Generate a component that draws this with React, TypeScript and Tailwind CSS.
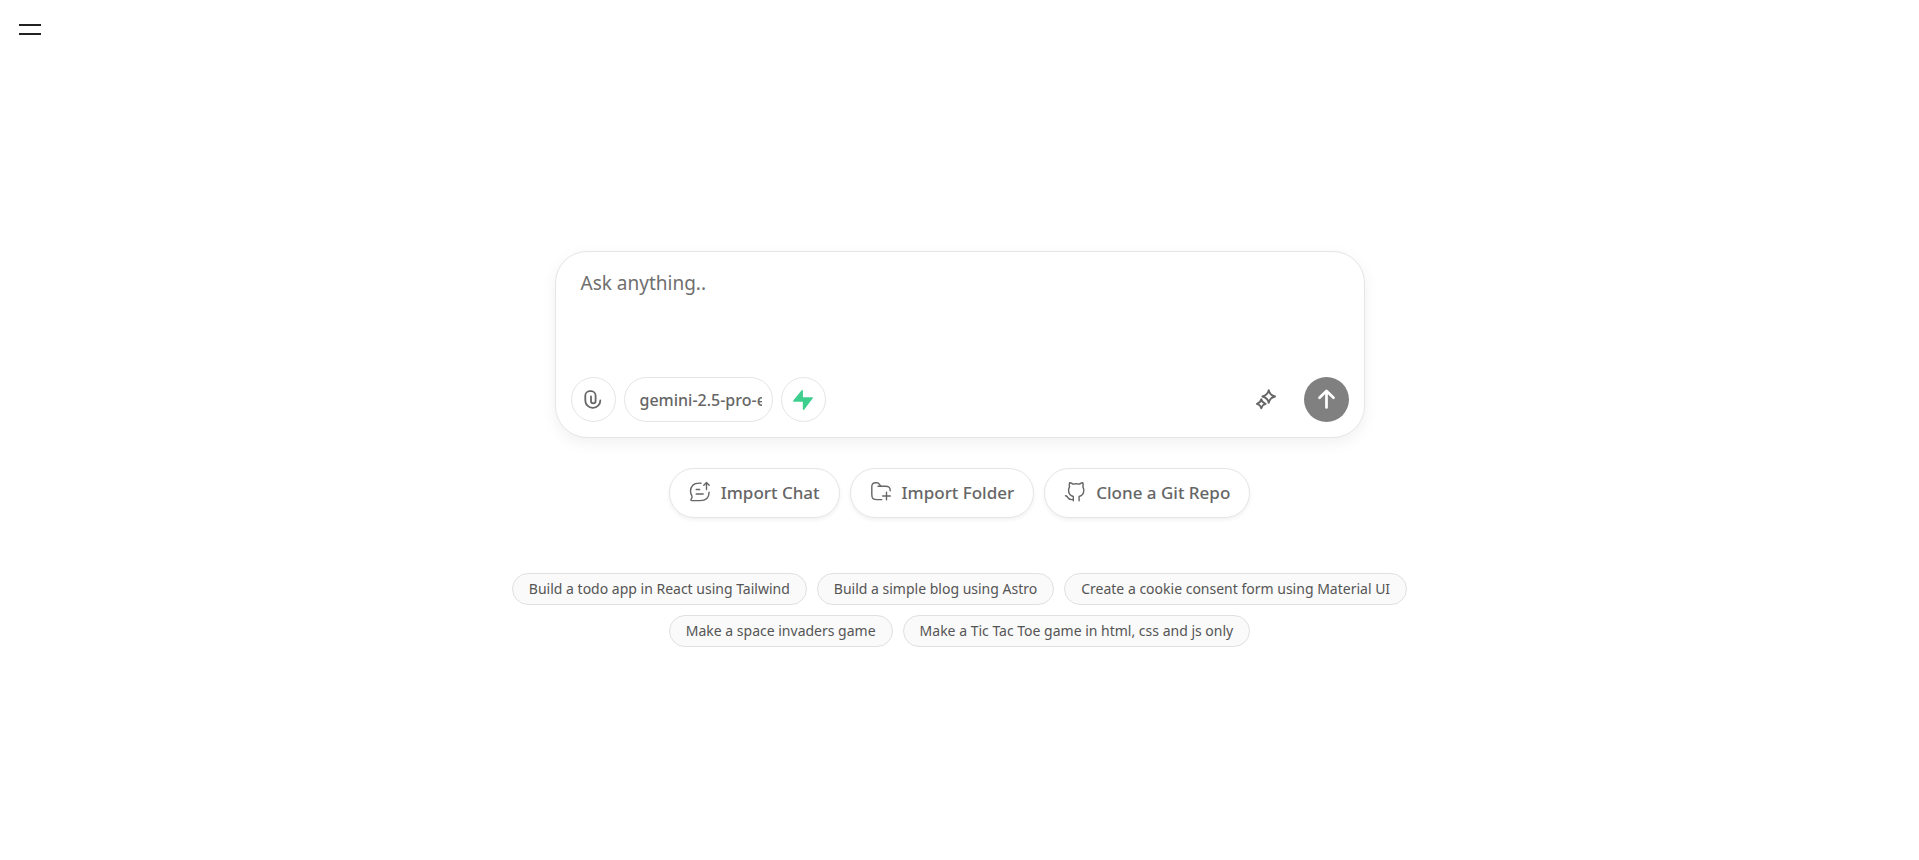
import type { ReactNode } from "react";

const stroke = {
  fill: "none",
  stroke: "currentColor",
  strokeLinecap: "round",
  strokeLinejoin: "round",
} as const;

function PaperclipIcon() {
  return (
    <svg width="20" height="20" viewBox="0 0 20 20" strokeWidth="1.8" {...stroke} aria-hidden="true">
      <path d="M8 6.500v4.600a2.300 2.300 0 0 0 4.600 0V5.700A4.500 4.500 0 0 0 8.200 1.200H6.700A4.500 4.500 0 0 0 2.300 5.700v4.800a7.300 7.300 0 0 0 7.300 7.300h.4a7.300 7.300 0 0 0 7.300-7.300" />
    </svg>
  );
}

function BoltIcon() {
  return (
    <svg width="22" height="22" viewBox="0 0 22 22" fill="#3ecf8e" stroke="#3ecf8e" strokeWidth="1.4" strokeLinejoin="round" aria-hidden="true">
      <path d="M10.200 1.700 1.800 12h9.700v8.200L20.200 8.900h-10z" />
    </svg>
  );
}

function SparklesIcon() {
  return (
    <svg width="22" height="22" viewBox="0 0 22 22" strokeWidth="1.9" {...stroke} aria-hidden="true">
      <path d="M13.700 1.200c.7 3.800 2.300 5.300 6.300 6.300-4 1-5.600 2.500-6.300 6.300-.7-3.800-2.300-5.300-6.300-6.300 4-1 5.600-2.500 6.300-6.300z" />
      <path d="M6.300 10.200c.5 2.700 1.700 3.900 4.400 4.600-2.700.7-3.900 1.900-4.400 4.600-.5-2.700-1.700-3.900-4.400-4.600 2.700-.7 3.900-1.900 4.400-4.600z" />
    </svg>
  );
}

function ArrowUpIcon() {
  return (
    <svg width="22" height="22" viewBox="0 0 22 22" strokeWidth="2.7" {...stroke} aria-hidden="true">
      <path d="M11.500 18.500V2.500M4.500 8.700 11.500 1.900l7 6.800" />
    </svg>
  );
}

function ChatUpIcon() {
  return (
    <svg width="22" height="22" viewBox="0 0 22 22" strokeWidth="1.4" {...stroke} aria-hidden="true">
      <path d="M12 2.200c-3.900-.2-6.400.2-8.200 2A8.300 8.300 0 0 0 1.500 10c0 1.700.4 3.200 1.300 4.600.6.900.2 2.400-.7 3.700-.5.700-.1 1.300.7 1.300h8.300c5.600 0 8.900-2.700 9-8.400" />
      <path d="M17.500 8.500V1.800M14.800 4.200l2.700-2.700 2.700 2.700" />
      <path d="M7.200 8.500h3.500M7.200 13h7" />
    </svg>
  );
}

function FolderPlusIcon() {
  return (
    <svg width="22" height="22" viewBox="0 0 22 22" strokeWidth="1.4" {...stroke} aria-hidden="true">
      <path d="M11.800 18.600H7.200c-4.300 0-5.400-1.100-5.400-5.400V5.600C1.800 3 3 1.800 5.600 1.800h1c1.500 0 2.200.4 2.900 1.500l1.300 2h4.600c3.600 0 4.800 1 4.800 4.400" />
      <path d="M8 5.300h3" />
      <path d="M16.500 11.200v7.600M12.700 15h7.600" />
    </svg>
  );
}

function OctocatIcon() {
  return (
    <svg width="22" height="22" viewBox="0 0 22 22" strokeWidth="1.4" {...stroke} aria-hidden="true">
      <path d="M9.300 19.800v-4.300c-2.900-.8-4.700-3-4.700-6.300 0-1.300.3-2.300.9-3.200-.3-1.600-.3-3 .1-4.300 1.500.2 2.600.7 3.500 1.400a14 14 0 0 1 6.200 0c.9-.7 2-1.200 3.500-1.400.4 1.300.4 2.700.1 4.300.6.9.9 1.900.9 3.200 0 3.300-1.800 5.500-4.700 6.300v4.300" />
      <path d="M1.500 14.800c1.600.1 2 1.100 2.700 2.200.8 1.200 2.500 1.800 5.100 1.500" />
    </svg>
  );
}

function RoundButton({ label, children }: { label: string; children: ReactNode }) {
  return (
    <button type="button" aria-label={label} className="flex size-[45px] items-center justify-center rounded-full border border-[#e5e5e5] bg-white">
      {children}
    </button>
  );
}

const imports = [
  { label: "Import Chat", icon: <ChatUpIcon /> },
  { label: "Import Folder", icon: <FolderPlusIcon /> },
  { label: "Clone a Git Repo", icon: <OctocatIcon /> },
];

const prompts = [
  "Build a todo app in React using Tailwind",
  "Build a simple blog using Astro",
  "Create a cookie consent form using Material UI",
  "Make a space invaders game",
  "Make a Tic Tac Toe game in html, css and js only",
];

export default function App() {
  return (
    <div className="min-h-screen bg-white font-['Noto_Sans','Open_Sans',sans-serif] text-[#666666]">
      <header className="flex h-[59px] items-center px-[19px]">
        <button type="button" aria-label="Open menu" className="flex w-[22px] flex-col gap-[7px]">
          <span className="h-[2px] w-full bg-[#222222]" />
          <span className="h-[2px] w-full bg-[#222222]" />
        </button>
      </header>

      <main className="flex flex-col items-center px-4 pt-48 pb-8">
        <form className="flex w-full max-w-[810px] flex-col rounded-[32px] border border-[#e5e5e5] bg-white p-[15px] shadow-[0_5px_15px_rgba(0,0,0,0.06)]" onSubmit={(e) => e.preventDefault()}>
          <textarea
            aria-label="Prompt"
            placeholder="Ask anything.."
            className="h-[110px] w-full resize-none bg-transparent px-[10px] text-[19px] leading-8 outline-none placeholder:text-[#6f6f6f]"
          />
          <div className="flex items-center gap-2">
            <RoundButton label="Attach files">
              <PaperclipIcon />
            </RoundButton>
            <input
              type="text"
              aria-label="Model"
              defaultValue="gemini-2.5-pro-exp-03-25"
              className="h-[45px] w-[149px] rounded-full border border-[#e5e5e5] bg-white pr-[10px] pl-[15px] text-base font-medium outline-none"
            />
            <RoundButton label="Connect Supabase">
              <BoltIcon />
            </RoundButton>
            <div className="ml-auto flex items-center gap-[15px]">
              <button type="button" aria-label="Enhance prompt" className="flex size-[45px] items-center justify-center">
                <SparklesIcon />
              </button>
              <button type="submit" aria-label="Send" className="flex size-[45px] items-center justify-center rounded-full bg-[#808080] text-white">
                <ArrowUpIcon />
              </button>
            </div>
          </div>
        </form>

        <div className="mt-[30px] flex flex-wrap justify-center gap-[10px]">
          {imports.map(({ label, icon }) => (
            <button key={label} type="button" className="flex h-[50px] items-center gap-[10px] rounded-full border border-[#e5e5e5] bg-white px-[19px] text-[17px] font-medium shadow-[0_2px_4px_rgba(0,0,0,0.06)]">
              <span className="mb-0.5">{icon}</span>
              {label}
            </button>
          ))}
        </div>

        <div className="mt-[55px] flex w-full max-w-[920px] flex-wrap justify-center gap-[10px]">
          {prompts.map((prompt) => (
            <button key={prompt} type="button" className="h-8 rounded-full border border-[#e0e0e0] bg-[#fafafa] px-4 text-sm text-[#555555]">
              {prompt}
            </button>
          ))}
        </div>
      </main>
    </div>
  );
}
